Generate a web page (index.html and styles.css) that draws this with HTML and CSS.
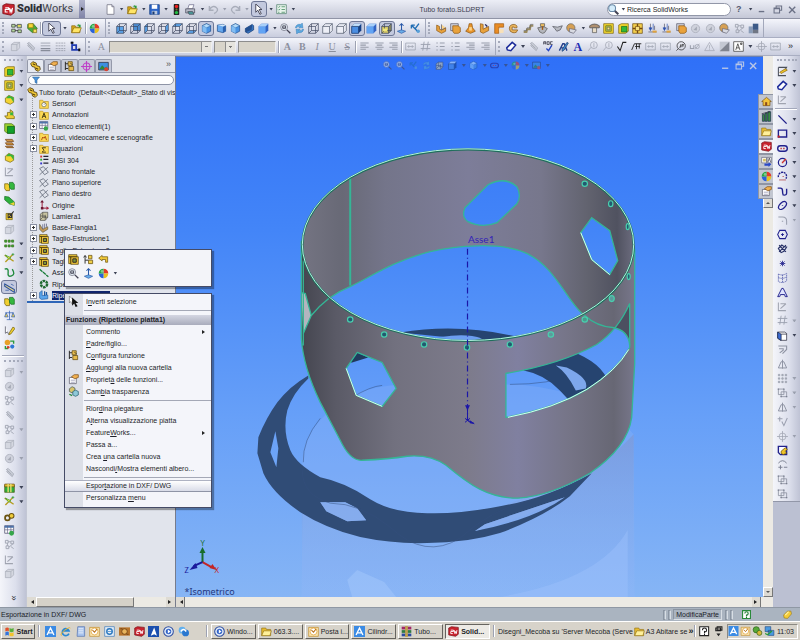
FILE: index.html
```html
<!DOCTYPE html>
<html lang="it">
<head>
<meta charset="utf-8">
<title>SolidWorks - Tubo forato.SLDPRT</title>
<link rel="stylesheet" href="styles.css">
</head>
<body>
<svg class="sprite" aria-hidden="true">
<symbol id="new" viewBox="0 0 16 16"><path d="M3 1h7l3 3v11H3z" fill="#fff" stroke="#667"/><path d="M10 1v3h3" fill="#ccd" stroke="#667"/></symbol>
<symbol id="open" viewBox="0 0 16 16"><path d="M1 4h5l1 2h6v8H1z" fill="#d8a818" stroke="#8a6a10"/><path d="M1 14l3-7h11l-3 7z" fill="#ffe566" stroke="#8a6a10"/><path d="M8 4q3-4 5-1l1-1v4h-4l2-1q-2-2-4-1z" fill="#2a9a3a"/></symbol>
<symbol id="folder" viewBox="0 0 16 16"><path d="M1 3h6l1 2h6v9H1z" fill="#e8bc30" stroke="#94741a"/><path d="M1 14l3-7h11l-2 7z" fill="#fff09a" stroke="#94741a"/></symbol>
<symbol id="save" viewBox="0 0 16 16"><path d="M1 1h14v14H1z" fill="#2d66c8" stroke="#123c80"/><path d="M4 1h8v6H4z" fill="#fff"/><path d="M4 10h8v5H4z" fill="#b8c8e0"/><path d="M5 11h3v4H5z" fill="#1a3a70"/></symbol>
<symbol id="light" viewBox="0 0 16 16"><rect x="4" y="0" width="8" height="16" rx="1" fill="#222"/><circle cx="8" cy="3.500" r="2.500" fill="#e22"/><circle cx="8" cy="8" r="1.500" fill="#773"/><circle cx="8" cy="12.500" r="2.500" fill="#2b4"/></symbol>
<symbol id="print" viewBox="0 0 16 16"><path d="M4 7l2-6h7l-2 6z" fill="#fff" stroke="#668"/><path d="M1 7h13v6H1z" fill="#b8bcc8" stroke="#445"/><path d="M4 11h7l2 4H6z" fill="#4c9a9a" stroke="#445"/></symbol>
<symbol id="undo" viewBox="0 0 16 16"><path d="M2 3v6h6M2 8q5-7 10-3t-3 9" fill="none" stroke="#a8adba" stroke-width="2"/></symbol>
<symbol id="redo" viewBox="0 0 16 16"><path d="M14 3v6H8M14 8Q9 1 4 5t3 9" fill="none" stroke="#a8adba" stroke-width="2"/></symbol>
<symbol id="cursor" viewBox="0 0 16 16"><path d="M4 0v12l3-3 3 6 2-1-3-6h4z" fill="#fff" stroke="#334" stroke-width="1.200"/></symbol>
<symbol id="cursork" viewBox="0 0 16 16"><path d="M2 0v10l2-2 2 4 2-1-2-4h3z" fill="#fff" stroke="#777"/><path d="M6 2v12l3-3 2 5 3-1-3-5h4z" fill="#111"/></symbol>
<symbol id="list" viewBox="0 0 16 16"><path d="M1 1h14v13H1z" fill="#e8f4ec" stroke="#4a7a68"/><path d="M3 4l1 1 2-2M3 8l1 1 2-2M3 12h2M8 4h5M8 8h5M8 12h5" stroke="#2a7a4a" fill="none"/></symbol>
<symbol id="search" viewBox="0 0 16 16"><path d="M9 9l6 6" stroke="#445" stroke-width="3"/><circle cx="6" cy="6" r="5" fill="#d4ecfa" stroke="#6a8aa8" stroke-width="1.500"/></symbol>
<symbol id="zoomfit" viewBox="0 0 16 16"><path d="M10 10l5 5" stroke="#445" stroke-width="2"/><circle cx="6" cy="6" r="5" fill="#e8f0f8" stroke="#667"/><path d="M3 6h6M4 4h4v4H4z" stroke="#334" fill="none"/></symbol>
<symbol id="refresh" viewBox="0 0 16 16"><path d="M2 7q1-6 8-5l2-2 1 7H7l2-2q-4-1-5 2zM14 9q-1 6-8 5l-2 2-1-7h6l-2 2q4 1 5-2z" fill="#5aa8e0" stroke="#2a70b0" stroke-width=".600"/></symbol>
<symbol id="ball" viewBox="0 0 16 16"><path d="M8 8V1a7 7 0 0 1 7 7z" fill="#e23a2a"/><path d="M8 8h7a7 7 0 0 1-7 7z" fill="#e8c020"/><path d="M8 8v7a7 7 0 0 1-7-7z" fill="#2a62d8"/><path d="M8 8H1a7 7 0 0 1 7-7z" fill="#27a846"/><circle cx="6" cy="5" r="2" fill="#fff" opacity=".4"/></symbol>
<symbol id="tree1" viewBox="0 0 16 16"><path d="M1 2h5v4H1zM1 9h5v4H1zM9 2h6v5H9zM10 10h5v4h-5z" fill="#b8dca0" stroke="#333"/><path d="M6 4h3M6 11h4" stroke="#222"/><path d="M10 3h4v2h-4z" fill="#e8d040"/></symbol>
<symbol id="tag" viewBox="0 0 16 16"><path d="M1 2l8-1 6 7-7 6-7-6z" fill="#4caf3c" stroke="#2a6a1a"/><path d="M2 1h7v6H2z" fill="#f8d838" stroke="#8a7010"/><path d="M9 9h5v5H9z" fill="#f4e060" stroke="#7a6410"/></symbol>
<symbol id="cw" viewBox="0 0 16 16"><path d="M1 5h10v10H1zM5 1h10v10H5zM1 5l4-4M11 5l4-4M1 15l4-4M11 15l4-4" fill="none" stroke="#39425a"/></symbol>
<symbol id="cf" viewBox="0 0 16 16"><path d="M1 5h10v10H1z" fill="#5ba4ea"/><use href="#cw"/></symbol>
<symbol id="cb" viewBox="0 0 16 16"><path d="M5 1h10v10H5z" fill="#4d90d6"/><use href="#cw"/></symbol>
<symbol id="cl" viewBox="0 0 16 16"><path d="M1 5l4-4v10l-4 4z" fill="#5ba4ea"/><use href="#cw"/></symbol>
<symbol id="cr" viewBox="0 0 16 16"><path d="M11 5l4-4v10l-4 4z" fill="#5ba4ea"/><use href="#cw"/></symbol>
<symbol id="ct" viewBox="0 0 16 16"><path d="M1 5l4-4h10l-4 4z" fill="#5ba4ea"/><use href="#cw"/></symbol>
<symbol id="cd" viewBox="0 0 16 16"><path d="M1 15l4-4h10l-4 4z" fill="#5ba4ea"/><use href="#cw"/></symbol>
<symbol id="iso" viewBox="0 0 16 16"><path d="M8 1l6 3v8l-6 3-6-3V4z" fill="#4a94e4" stroke="#1b4c8c"/><path d="M8 1l6 3-6 3-6-3z" fill="#b4dcfa" stroke="#1b4c8c" stroke-width=".600"/><path d="M8 7v8l-6-3V4z" fill="#82bdf2"/></symbol>
<symbol id="tri" viewBox="0 0 16 16"><path d="M2 3l8-1 4 2v8l-4 2-8-2z" fill="#69aaee" stroke="#1b4c8c"/><path d="M10 5l4-1v8l-4 2z" fill="#2b62b0"/><path d="M2 3l8 2 4-1-4-2z" fill="#d0e8fc"/></symbol>
<symbol id="norm" viewBox="0 0 16 16"><path d="M2 8l10-6 2 2v6L6 15l-4-2z" fill="#3574c4" stroke="#163a70"/><path d="M2 8l10-6-1 8-8 3z" fill="#245090"/></symbol>
<symbol id="penA" viewBox="0 0 16 16"><path d="M2 14L7 4h2l4 10M4 10h7" fill="none" stroke="#24408c" stroke-width="2"/><path d="M6 12l7-10 2 1-6 10-3 2z" fill="#3f8ad0" stroke="#1b3a6c"/></symbol>
<symbol id="shade" viewBox="0 0 16 16"><path d="M1 5l4-4h10v10l-4 4H1z" fill="#143f86"/><path d="M1 5h10v10H1z" fill="#4b8ee2"/><path d="M1 5l4-4h10l-4 4z" fill="#c2e0fb"/><path d="M1 5h10v10H1z" fill="none" stroke="#1b3a6c"/></symbol>
<symbol id="shade2" viewBox="0 0 16 16"><path d="M1 5l4-4h10v10l-4 4H1z" fill="#3264c4"/><path d="M1 5h10v10H1z" fill="#62a4f4"/><path d="M1 5l4-4h10l-4 4z" fill="#a8d0fa"/></symbol>
<symbol id="shade3" viewBox="0 0 16 16"><path d="M1 5h10v10H1z" fill="#d0c468"/><path d="M11 5l4-4v10l-4 4z" fill="#8a8a60"/><use href="#cw"/><path d="M3 8h6v4H3z" fill="#f2e87a"/></symbol>
<symbol id="hide" viewBox="0 0 16 16"><path d="M1 5l4-4h10v10l-4 4H1zM1 5h10v10M11 5l4-4" fill="#eceef6" stroke="#4c5468"/></symbol>
<symbol id="axis" viewBox="0 0 16 16"><path d="M8 1v11M5 4l3-3 3 3" stroke="#2858a8" fill="none" stroke-width="1.500"/><path d="M2 12l6-2 6 2-6 3z" fill="#6aaee8" stroke="#2858a8"/></symbol>
<symbol id="pins" viewBox="0 0 16 16"><path d="M2 3l10 10M2 3h5M2 3v5M13 1L7 9" stroke="#1f6db4" stroke-width="2" fill="none"/><circle cx="12" cy="12" r="2.500" fill="#58a0d8"/></symbol>
<symbol id="f1" viewBox="0 0 16 16"><path d="M1 3l4 2v4l3 1 6-3v5l-6 3-7-4z" fill="#e9a23c" stroke="#8a5510"/><path d="M8 2v8l6-3" fill="#fbd48a" stroke="#556"/></symbol>
<symbol id="f2" viewBox="0 0 16 16"><path d="M1 1h11v10H1z" fill="#d0d4e0" stroke="#556"/><path d="M4 4h8l3 3v6l-3 2H6l-2-3z" fill="#e9a23c" stroke="#8a5510"/></symbol>
<symbol id="f3" viewBox="0 0 16 16"><path d="M6 1h4l1 6 4 5-7 3-7-3 4-5z" fill="#e9952c" stroke="#8a5510"/><path d="M6 6h4v5H6z" fill="#fbd48a"/></symbol>
<symbol id="f4" viewBox="0 0 16 16"><path d="M2 1l4 1v7l8-4v6l-8 4-4-2z" fill="#e9a23c" stroke="#8a5510"/><path d="M9 2l3 3" stroke="#225" stroke-width="2"/></symbol>
<symbol id="f5" viewBox="0 0 16 16"><path d="M1 1h13v5H7v9H1z" fill="#e98c24" stroke="#a05a10"/><path d="M7 8l7 1v5l-6 1z" fill="#f8e0b8"/></symbol>
<symbol id="f6" viewBox="0 0 16 16"><path d="M2 8q0-6 7-6 5 1 4 5H9q0-2-3-1v4h8q-1 5-7 4-5-1-5-6z" fill="#e9b45c" stroke="#805010"/></symbol>
<symbol id="f7" viewBox="0 0 16 16"><path d="M1 13h4l1-4h4l1-5h4" fill="none" stroke="#998a60" stroke-width="3"/><path d="M1 11h4l1-4h4l1-5h4" fill="none" stroke="#656565"/></symbol>
<symbol id="f8" viewBox="0 0 16 16"><path d="M5 1h6v4H5z" fill="#f0c060" stroke="#555"/><path d="M1 7l6-1h4l4 2-4 6-3 1-4-2z" fill="#b4b6bc" stroke="#555"/><path d="M8 5v5" stroke="#a05a10" stroke-width="2"/></symbol>
<symbol id="fh" viewBox="0 0 16 16"><path d="M1 4q7-5 14 0v3H1z" fill="#b09070" stroke="#444"/><path d="M5 7h6v7H5z" fill="#e8ddc8" stroke="#555"/></symbol>
<symbol id="fd" viewBox="0 0 16 16"><path d="M1 5l7 1 7-2-3 6-5 2-3-4z" fill="#b8bac2" stroke="#50525c"/></symbol>
<symbol id="f9" viewBox="0 0 16 16"><circle cx="7" cy="7" r="6" fill="#d6a054" stroke="#666"/><path d="M5 8l10 2-4 5-6-2z" fill="#d8dae2" stroke="#667"/></symbol>
<symbol id="yb" viewBox="0 0 16 16"><path d="M1 1h14v14H1z" fill="#f4d92e" stroke="#776112"/><path d="M4 4h8v8H4z" fill="#b8d850" stroke="#6a5a10"/><path d="M6 6h4v4H6z" fill="#f7ec80" stroke="#555"/></symbol>
<symbol id="yg" viewBox="0 0 16 16"><path d="M1 3l4-2h10v11l-4 3H1z" fill="#f2d52c" stroke="#776112"/><path d="M5 5h8v8H5z" fill="#30b83a" stroke="#146a1c"/></symbol>
<symbol id="yp" viewBox="0 0 16 16"><path d="M1 1h14v14H1z" fill="#f4cf4c" stroke="#6a4a10"/><path d="M1 8h14M8 1v14" stroke="#744a10" stroke-width="2"/><path d="M5 5h6v6H5z" fill="#f7e080" stroke="#744a10"/></symbol>
<symbol id="dim1" viewBox="0 0 16 16"><path d="M2 13h12M5 1v9M11 4v6" stroke="#556"/><path d="M3 7l2 4 2-4zM9 1v9" stroke="#2a50b0" fill="#2a50b0"/><path d="M8 11h6v3H8z" fill="#e0a23c"/></symbol>
<symbol id="gray" viewBox="0 0 16 16"><circle cx="8" cy="8" r="6" fill="#cfd2dc" stroke="#a4a8b4"/><path d="M5 10l5-5v6z" fill="#a4a8b4"/></symbol>
<symbol id="gcube" viewBox="0 0 16 16"><path d="M2 5l4-3h8v8l-4 4H2z" fill="#d4d7e0" stroke="#a8acb8"/><path d="M2 5h8v9M10 5l4-3" fill="none" stroke="#a8acb8"/></symbol>
<symbol id="gsk" viewBox="0 0 16 16"><path d="M2 2v12h11M5 4h8M5 11l8-7" fill="none" stroke="#a0a4b0" stroke-width="1.500"/></symbol>
<symbol id="gnodes" viewBox="0 0 16 16"><path d="M2 2h4v4H2zM10 3h4v4h-4zM3 10h4v4H3zM10 11l4 3M6 4h4M5 6v4M13 7l-6 5" fill="none" stroke="#9ea3b0" stroke-width="1.300"/></symbol>
<symbol id="gclip" viewBox="0 0 16 16"><path d="M3 4l3-2 8 8-2 4-8-7 1-2 6 6" fill="#c8ccd6" stroke="#9a9fac"/></symbol>
<symbol id="ggrid" viewBox="0 0 16 16"><path d="M2 2h2v2H2zM7 2h2v2H7zM12 2h2v2h-2zM2 7h2v2H2zM7 7h2v2H7zM12 7h2v2h-2zM2 12h2v2H2zM7 12h2v2H7zM12 12h2v2h-2z" fill="#c8ccd6" stroke="#8f94a2"/></symbol>
<symbol id="lines" viewBox="0 0 16 16"><path d="M1 3h14M1 7h14" stroke="#888d9a"/><path d="M1 11h14M1 14h14" stroke="#888d9a" stroke-width="2"/></symbol>
<symbol id="dash" viewBox="0 0 16 16"><path d="M1 3h14M1 7h14M1 11h14M1 14h14" stroke="#8d929f" stroke-dasharray="3 1"/></symbol>
<symbol id="bluel" viewBox="0 0 16 16"><path d="M3 1v12h11M3 6h6v7" stroke="#1f3bb0" stroke-width="2.500" fill="none"/><path d="M1 1h4v3H1zM12 11h3v4h-3z" fill="#111"/></symbol>
<symbol id="al" viewBox="0 0 16 16"><path d="M2 3h12M2 6h8M2 9h12M2 12h8" stroke="#989dab" stroke-width="1.500"/></symbol>
<symbol id="ac" viewBox="0 0 16 16"><path d="M2 3h12M4 6h8M2 9h12M4 12h8" stroke="#989dab" stroke-width="1.500"/></symbol>
<symbol id="ar" viewBox="0 0 16 16"><path d="M2 3h12M6 6h8M2 9h12M6 12h8" stroke="#989dab" stroke-width="1.500"/></symbol>
<symbol id="bul" viewBox="0 0 16 16"><path d="M2 3h2M2 8h2M2 13h2M7 3h7M7 8h7M7 13h7" stroke="#989dab" stroke-width="1.500"/></symbol>
<symbol id="box" viewBox="0 0 16 16"><path d="M1 3h14v10H1zM4 8h8M6 6L4 8l2 2M10 6l2 2-2 2" stroke="#989dab" fill="none"/></symbol>
<symbol id="erase" viewBox="0 0 16 16"><path d="M1 10l8-8 5 4-7 8-5-1z" fill="#fff" stroke="#1d2c9a" stroke-width="2.200"/></symbol>
<symbol id="abc" viewBox="0 0 16 16"><path d="M5 11l3 3 5-8" stroke="#2544c0" stroke-width="2" fill="none"/><path d="M1 5V1h3v4M1 3h3M6 1v4h3V1zM14 1h-3v4h3" stroke="#223" fill="none"/></symbol>
<symbol id="bal" viewBox="0 0 16 16"><circle cx="10" cy="6" r="5" fill="none" stroke="#9a9fac"/><path d="M10 3v6M2 14l4-5" stroke="#9a9fac"/></symbol>
<symbol id="rough" viewBox="0 0 16 16"><path d="M2 8l4 6 4-12h5" stroke="#222" stroke-width="1.500" fill="none"/></symbol>
<symbol id="weld" viewBox="0 0 16 16"><path d="M1 13l4-9h10M6 8h7M8 4v8M12 4v7" stroke="#222" stroke-width="1.300" fill="none"/></symbol>
<symbol id="a1b" viewBox="0 0 16 16"><circle cx="9" cy="7" r="6" fill="none" stroke="#222"/><path d="M2 14l3-3M6 9h2V5M10 9V5h3M10 7h3" stroke="#222" fill="none"/></symbol>
<symbol id="holec" viewBox="0 0 16 16"><path d="M2 6v5h5V6" fill="none" stroke="#9a9fac" stroke-width="1.500"/><circle cx="12" cy="8" r="3" fill="none" stroke="#9a9fac"/><path d="M9 12l6-8" stroke="#9a9fac"/></symbol>
<symbol id="warn" viewBox="0 0 16 16"><path d="M8 2l7 12H1zM8 6v5M8 12v1" fill="none" stroke="#a0a4b2"/></symbol>
<symbol id="hatch" viewBox="0 0 16 16"><path d="M1 1h14v14H1z" fill="#c4c8d2"/><path d="M15 1v14H1z" fill="#80848f"/></symbol>
<symbol id="blocks" viewBox="0 0 16 16"><path d="M1 5h6v10H1z" fill="#8a9cb8"/><path d="M7 1h8v9H7z" fill="#3c5a88"/><path d="M7 10h8v5H7z" fill="#707684"/></symbol>
<symbol id="frameA" viewBox="0 0 16 16"><path d="M1 1h14v14H1z" fill="#fff" stroke="#333"/><path d="M4 13l3-9 3 9M5 10h4M11 3h2v2h-2z" stroke="#222" fill="none"/></symbol>
<symbol id="target" viewBox="0 0 16 16"><circle cx="8" cy="8" r="5" fill="none" stroke="#9a9fac"/><path d="M8 0v16M0 8h16" stroke="#9a9fac"/></symbol>
<symbol id="gear" viewBox="0 0 16 16"><path d="M1 4l3-3 5 2 1 4 4 1 1 4-3 3-4-2-1-4-4-1z" fill="#f0c838" stroke="#4c3808" stroke-width="1.200"/><path d="M4 4l4 2M8 10l4 2" stroke="#4c3808" stroke-width="1.500"/></symbol>
<symbol id="hand" viewBox="0 0 16 16"><path d="M2 5h10v9H2z" fill="#fff" stroke="#556"/><path d="M5 4l4-3h6v4l-5 2z" fill="#f0b050" stroke="#7a4a10"/><path d="M4 9h6M4 12h6" stroke="#88a"/></symbol>
<symbol id="conf" viewBox="0 0 16 16"><path d="M2 1v12M2 4h4M2 11h4" stroke="#333" fill="none" stroke-width="1.500"/><path d="M6 1h6v6H6zM7 8h7v6H7z" fill="#e6bb4c" stroke="#5c4408"/><path d="M9 3l4 3" stroke="#3a3a20"/></symbol>
<symbol id="parent" viewBox="0 0 16 16"><path d="M3 14V3M1 5l2-3 2 3M3 9h5" stroke="#333" fill="none" stroke-width="1.400"/><path d="M8 2h5v5H8zM8 9h6v5H8z" fill="#f0cf48" stroke="#5c4408"/></symbol>
<symbol id="cross" viewBox="0 0 16 16"><circle cx="8" cy="8" r="5" fill="none" stroke="#c040c8" stroke-width="1.600"/><path d="M8 0v16M0 8h16" stroke="#c040c8" stroke-width="1.600"/></symbol>
<symbol id="pic" viewBox="0 0 16 16"><path d="M1 2h14v11H1z" fill="#3d8fe0" stroke="#223"/><path d="M2 12l4-6 4 4 2-2 2 4z" fill="#2f8a3a"/><circle cx="12" cy="12" r="3" fill="#d84432"/></symbol>
<symbol id="funnel" viewBox="0 0 16 16"><path d="M1 2h14L10 8v7l-4-2V8z" fill="#4c94dc" stroke="#22588c"/></symbol>
<symbol id="fa" viewBox="0 0 16 16"><path d="M1 2h5l1 2h8v11H1z" fill="#fcd955" stroke="#b78f1c"/><path d="M5 13l3-8 3 8M6 10h4" stroke="#332b10" stroke-width="1.400" fill="none"/></symbol>
<symbol id="fs" viewBox="0 0 16 16"><path d="M1 2h5l1 2h8v11H1z" fill="#fcd955" stroke="#b78f1c"/><circle cx="8" cy="9" r="3.500" fill="#fff" stroke="#554"/><path d="M8 9l2-2" stroke="#333"/></symbol>
<symbol id="fl" viewBox="0 0 16 16"><path d="M1 2h5l1 2h8v11H1z" fill="#fcd955" stroke="#b78f1c"/><path d="M4 13l2-5 2 2 2-3 2 6" stroke="#b04a10" stroke-width="1.500" fill="none"/></symbol>
<symbol id="fe" viewBox="0 0 16 16"><path d="M1 2h5l1 2h8v11H1z" fill="#fcd955" stroke="#b78f1c"/><path d="M11 6H5l3 4-3 3h6" stroke="#332b10" stroke-width="1.400" fill="none"/></symbol>
<symbol id="tab" viewBox="0 0 16 16"><path d="M1 1h13v11H1z" fill="#fff" stroke="#446"/><path d="M1 1h13v3H1z" fill="#4a76b0"/><path d="M1 7h13M5 1v11M10 1v11" stroke="#668"/><circle cx="11" cy="12" r="3.500" fill="#35a64a"/></symbol>
<symbol id="mat" viewBox="0 0 16 16"><path d="M2 1h3v3H2z" fill="#c33"/><path d="M2 6h3v3H2z" fill="#3a3"/><path d="M2 12h3v3H2z" fill="#33c"/><path d="M7 2h8M7 7h8M7 13h8" stroke="#223" stroke-width="2"/></symbol>
<symbol id="plane" viewBox="0 0 16 16"><path d="M1 4l6-3 8 9-6 4zM1 14L14 2" fill="none" stroke="#5a6270" stroke-width="1.200"/></symbol>
<symbol id="orig" viewBox="0 0 16 16"><path d="M5 2v11h10" fill="none" stroke="#a22340" stroke-width="1.600"/><path d="M5 0l3 4H2zM3 11h4v4H3z" fill="#6a1630"/><path d="M12 10l4 3-4 3z" fill="#a22340"/></symbol>
<symbol id="sheet" viewBox="0 0 16 16"><path d="M2 5l4-3h8v8l-4 5H2zM6 2v8l-4 4M6 10h8M2 8h8v6M10 6v4" fill="#c9c4a0" stroke="#444"/></symbol>
<symbol id="flange" viewBox="0 0 16 16"><path d="M1 2l5 8 8-4v4l-8 5-5-5z" fill="#c89c58" stroke="#554"/><path d="M6 2v8M9 1v7M12 1v5" stroke="#446"/></symbol>
<symbol id="cut" viewBox="0 0 16 16"><path d="M1 1h12v3H1zM1 4h3v10H1zM4 4h11v11H4z" fill="#f0c93c" stroke="#4e3c08"/><path d="M7 7h5v5H7z" fill="#7b9a3a" stroke="#322" stroke-width="1.400"/></symbol>
<symbol id="axl" viewBox="0 0 16 16"><path d="M1 2l14 12" stroke="#157a35" stroke-width="2" stroke-dasharray="6 1"/></symbol>
<symbol id="circ" viewBox="0 0 16 16"><circle cx="8" cy="8" r="5" fill="none" stroke="#206a30" stroke-width="4" stroke-dasharray="4 1.200"/></symbol>
<symbol id="flat" viewBox="0 0 16 16"><path d="M1 4l4-3v8l9-1v6L4 15l-3-2z" fill="#5aa5ec" stroke="#1c56a0"/><path d="M9 2v7M12 3v5" stroke="#1c56a0" stroke-width="2"/></symbol>
<symbol id="gg" viewBox="0 0 16 16"><path d="M1 4h5l2 3v7H3l-2-3z" fill="#f0cf30" stroke="#6d5c0c"/><path d="M8 2h5l2 3v7h-5l-2-3z" fill="#35b840" stroke="#176a20"/></symbol>
<symbol id="gy" viewBox="0 0 16 16"><path d="M2 6l5-4 7 3v7l-5 3-7-3z" fill="#f4d432" stroke="#7a6610"/><path d="M7 2l7 3v7l-4-6H3z" fill="#38b43e"/></symbol>
<symbol id="gstep" viewBox="0 0 16 16"><path d="M1 10h4V5h4V1l4 3v5l2 2v3H4z" fill="#eccd38" stroke="#6d5c0c"/><path d="M9 5h4v4H9z" fill="#38b43e"/></symbol>
<symbol id="gbox" viewBox="0 0 16 16"><path d="M1 1h10l4 3v11H5l-4-3z" fill="#9ad430" stroke="#4a6a10"/><path d="M5 5h10v10H5z" fill="#12a02c" stroke="#0c5c18"/></symbol>
<symbol id="brown" viewBox="0 0 16 16"><path d="M2 2h10l2 3H4zM2 7h10l2 3H4zM2 12h10l2 2H4z" fill="#d79a48" stroke="#6a3c10"/></symbol>
<symbol id="gwedge" viewBox="0 0 16 16"><path d="M1 2l6 1 8 7v5l-7-2-7-6z" fill="#2eb13c" stroke="#176a20"/><path d="M8 13l7-3v5z" fill="#f2d434"/></symbol>
<symbol id="wand" viewBox="0 0 16 16"><path d="M3 5h9v9H3z" fill="#eecb34" stroke="#6d5c0c"/><path d="M6 12l8-10M6 6h5v5H6z" stroke="#333" stroke-width="1.500" fill="none"/></symbol>
<symbol id="dots" viewBox="0 0 16 16"><path d="M1 3h3v3H1zM6 3h3v3H6zM11 3h3v3h-3zM1 10h3v3H1zM6 10h3v3H6zM11 10h3v3h-3z" fill="#35b840" stroke="#3e6a14"/></symbol>
<symbol id="gift" viewBox="0 0 16 16"><path d="M1 5h14v10H1z" fill="#2fae3a" stroke="#4a5a10"/><path d="M1 3h14v4H1z" fill="#e4c030" stroke="#6a4a10"/><path d="M6 3v12M10 3v12" stroke="#e8e070" stroke-width="2"/></symbol>
<symbol id="spark" viewBox="0 0 16 16"><path d="M1 3l13 9M2 13L13 2" stroke="#b59c20" stroke-width="2"/><path d="M11 2h4M13 0v4M2 3l5 6 3-2z" stroke="#2a9a3a" fill="#f4df40"/></symbol>
<symbol id="curve" viewBox="0 0 16 16"><path d="M1 3q6-2 5 5t5 5 1-10" fill="none" stroke="#1f8a3c" stroke-width="2"/></symbol>
<symbol id="meas" viewBox="0 0 16 16"><path d="M1 3l14 8v4L1 6z" fill="#e7d58b" stroke="#274f9c" stroke-width="1.500"/><path d="M2 12h5M10 3l4 2" stroke="#274f9c"/></symbol>
<symbol id="scale" viewBox="0 0 16 16"><path d="M8 1v13M2 4h12M4 14h8M3 4l-2 6h5zM13 4l-2 6h5z" stroke="#2a5cb4" fill="#f0cf4a"/></symbol>
<symbol id="pen" viewBox="0 0 16 16"><path d="M2 2v10l3-2 2 4" stroke="#445" fill="#fff"/><path d="M8 11l5-8 3 2-6 8-3 1z" fill="#f0cf30" stroke="#6d5c0c"/></symbol>
<symbol id="swap" viewBox="0 0 16 16"><circle cx="5" cy="5" r="4" fill="#e8a028"/><circle cx="12" cy="11" r="3" fill="#2f78d4"/><path d="M9 3h5v4M6 14H2v-4" stroke="#2a9a3a" stroke-width="2" fill="none"/><circle cx="6" cy="12" r="2" fill="#d43c28"/></symbol>
<symbol id="cogs" viewBox="0 0 16 16"><circle cx="5" cy="10" r="3.500" fill="none" stroke="#6a5210" stroke-width="2.500"/><circle cx="11" cy="7" r="3.500" fill="#f0cc38" stroke="#6a5210" stroke-width="1.500"/></symbol>
<symbol id="ske" viewBox="0 0 16 16"><path d="M2 2v12h11M2 2h12l-3 5" fill="none" stroke="#4a4f5c" stroke-width="1.500"/><path d="M4 9l8-5 3 2-9 5z" fill="#f0c428" stroke="#866410"/></symbol>
<symbol id="skb" viewBox="0 0 16 16"><path d="M2 2h12v12H5l-3-3z" fill="#fff" stroke="#21218c" stroke-width="2"/><path d="M6 9l6-5 3 2-3 3 2 3-5 2-3-2z" fill="#f0c428" stroke="#5a4408"/></symbol>
<symbol id="s1" viewBox="0 0 16 16"><path d="M2 2l12 12" stroke="#21218c" stroke-width="2"/></symbol>
<symbol id="s2" viewBox="0 0 16 16"><path d="M2 3h12v10H2z" fill="none" stroke="#21218c" stroke-width="2"/><path d="M1 11h3v3H1z" fill="#c22"/></symbol>
<symbol id="s3" viewBox="0 0 16 16"><rect x="1" y="4" width="14" height="8" rx="4" fill="none" stroke="#21218c" stroke-width="2"/><path d="M5 8h2M9 8h2" stroke="#b33" stroke-width="2"/></symbol>
<symbol id="s4" viewBox="0 0 16 16"><circle cx="8" cy="8" r="6" fill="none" stroke="#21218c" stroke-width="1.800"/><path d="M8 8l5-5M7 8h2" stroke="#c33" stroke-width="2"/></symbol>
<symbol id="s5" viewBox="0 0 16 16"><path d="M2 9a6 6 0 1 1 11 2" fill="none" stroke="#21218c" stroke-width="2" stroke-dasharray="3 1"/><path d="M3 13h10M8 8h2" stroke="#a33"/></symbol>
<symbol id="s6" viewBox="0 0 16 16"><path d="M1 3h4q3 0 3 4t1 6q5 1 5-3V4" fill="none" stroke="#21218c" stroke-width="2"/></symbol>
<symbol id="s7" viewBox="0 0 16 16"><ellipse cx="8" cy="8" rx="7" ry="4" transform="rotate(-45 8 8)" fill="none" stroke="#21218c" stroke-width="1.800"/><path d="M7 8h2" stroke="#21218c"/></symbol>
<symbol id="s8" viewBox="0 0 16 16"><path d="M2 3h6q6 0 6 6v5M7 9h2" fill="none" stroke="#9a9fae" stroke-width="1.500"/></symbol>
<symbol id="s9" viewBox="0 0 16 16"><path d="M4 2h8l3 6-3 6H4L1 8zM6 8h4M8 6v4" fill="none" stroke="#21218c" stroke-width="1.500"/></symbol>
<symbol id="s10" viewBox="0 0 16 16"><path d="M2 8l5-5 3 2 4 1-4 6-4 2zM3 3l10 10M13 3L3 13" fill="none" stroke="#273066" stroke-width="1.600"/></symbol>
<symbol id="s11" viewBox="0 0 16 16"><path d="M8 4v8M4 8h8M5 5l6 6M11 5l-6 6" stroke="#21218c" stroke-width="1.200"/></symbol>
<symbol id="s12" viewBox="0 0 16 16"><path d="M2 3q6 3 12-1v11q-6 4-12 1zM2 8q6 3 12-1M8 4v11" fill="none" stroke="#3b45a0" stroke-dasharray="2 1"/></symbol>
<symbol id="s13" viewBox="0 0 16 16"><path d="M1 14L7 2h2l6 12h-3l-1-3H5l-1 3z" fill="#dfe4ff" stroke="#21218c" stroke-width="1.400"/></symbol>
<symbol id="gtrim" viewBox="0 0 16 16"><path d="M1 5h14M1 11h14M6 1l-2 13M12 1l-2 13" stroke="#9a9fae" stroke-width="1.300"/></symbol>
<symbol id="gmir" viewBox="0 0 16 16"><path d="M8 1v13M6 4L2 13h12L10 4z" fill="none" stroke="#8e93a2" stroke-width="1.400"/></symbol>
<symbol id="goff" viewBox="0 0 16 16"><path d="M2 3h12v5l-6 6M3 7h6v2l-5 4" fill="none" stroke="#8e93a2" stroke-width="1.600"/></symbol>
<symbol id="gsq" viewBox="0 0 16 16"><path d="M2 3h8v8H2zM6 7h8v7H6z" fill="none" stroke="#8e93a2" stroke-width="1.200"/><path d="M1 2h2v2H1zM9 2h2v2H9zM13 13h2v2h-2zM5 13h2v2H5z" fill="#7a7f90"/></symbol>
<symbol id="garc" viewBox="0 0 16 16"><path d="M2 6q6-7 12 0M5 9v6M2 12h6M10 12h5" fill="none" stroke="#7a7f90" stroke-width="1.400"/></symbol>
<symbol id="gpv" viewBox="0 0 16 16"><path d="M4 1v7M1 4h7M7 8l3 6 5-11" fill="none" stroke="#9a9fae" stroke-width="1.500"/></symbol>
<symbol id="dark" viewBox="0 0 16 16"><path d="M1 3h10l3 2v10H5l-4-3z" fill="#fff" stroke="#223"/><path d="M1 3l5 3v9l-5-3z" fill="#3d6cd4" stroke="#124"/><path d="M6 6h8" stroke="#223"/></symbol>
<symbol id="home" viewBox="0 0 16 16"><path d="M1 8l7-6 7 6h-2v6H3V8z" fill="#f3c33c" stroke="#7a5210"/><path d="M6 9h3v5H6z" fill="#8a4a1c"/></symbol>
<symbol id="lib" viewBox="0 0 16 16"><path d="M2 5h3v10H2zM6 3h3v12H6zM10 1h4v14h-4z" fill="#3a8a44" stroke="#1c2c4c"/><path d="M1 4l12-3" stroke="#223"/></symbol>
<symbol id="swi" viewBox="0 0 16 16"><path d="M1 3l4-2 10 1v10l-4 3-10-2z" fill="#c8232e" stroke="#7a1018"/><path d="M4 6h4v2H4v3h3M9 6l1 5 1-3 1 3 1-5" stroke="#fff" fill="none" stroke-width="1.300"/></symbol>
<symbol id="pal" viewBox="0 0 16 16"><path d="M1 2h7v8H1zM9 2h6v8H9z" fill="#fff" stroke="#667"/><path d="M3 4h4v4H3z" fill="#d8c060"/><path d="M10 9l2-6 2 6" stroke="#334" fill="none"/><path d="M5 11h6v-2l4 3-4 4v-2H5z" fill="#2a48c8"/></symbol>
<symbol id="help" viewBox="0 0 16 16"><path d="M1 1h14v14H1z" fill="#fff" stroke="#2a8a3a" stroke-width="2"/><path d="M5 6q0-3 3-3t3 3-3 3v2M8 12v2" stroke="#1e7a30" stroke-width="2" fill="none"/></symbol>
<symbol id="helpk" viewBox="0 0 16 16"><path d="M1 1h13v13H1z" fill="#fff" stroke="#222" stroke-width="1.500"/><path d="M5 6q0-3 3-3t3 3-3 2v2M8 11v2" stroke="#222" stroke-width="1.500" fill="none"/></symbol>
<symbol id="label" viewBox="0 0 16 16"><path d="M1 9l7-7 6 0 1 5-7 8-6-1z" fill="#f5cc38" stroke="#92700e"/><path d="M4 9l6-6" stroke="#fff4a8" stroke-width="2"/></symbol>
<symbol id="win" viewBox="0 0 16 16"><path d="M2 3q3-2 5 0v5q-2-2-5 0z" fill="#e2502a"/><path d="M8 3q3 2 6 0v5q-3 2-6 0z" fill="#56b03a"/><path d="M2 9q3-2 5 0v5q-2-2-5 0z" fill="#3274dc"/><path d="M8 9q3 2 6 0v5q-3 2-6 0z" fill="#f2c32c"/></symbol>
<symbol id="appA" viewBox="0 0 16 16"><path d="M0 0h16v16H0z" fill="#3b8be4"/><path d="M3 13L8 3l5 10M5 10h6" fill="none" stroke="#fff" stroke-width="2"/></symbol>
<symbol id="ie" viewBox="0 0 16 16"><path d="M13 11a5 5 0 1 1 0-4H4" fill="none" stroke="#2a88d4" stroke-width="2.500"/><path d="M2 14q-2-3 5-8t8-3" fill="none" stroke="#e9b42a" stroke-width="1.400"/></symbol>
<symbol id="doc" viewBox="0 0 16 16"><path d="M4 1h10v14H3z" fill="#a9c4ee" stroke="#5070b0"/><path d="M5 4h7M5 7h7M5 10h7" stroke="#fff"/></symbol>
<symbol id="mail" viewBox="0 0 16 16"><path d="M1 2h14v13H1z" fill="#fbe7b4" stroke="#c08a28"/><circle cx="8" cy="8" r="5" fill="#fff" stroke="#e09a28"/><path d="M5 6l3 3 4-5" stroke="#b9701a" stroke-width="1.500" fill="none"/></symbol>
<symbol id="eng" viewBox="0 0 16 16"><path d="M1 1h14v14H1z" fill="#e8f0f8" stroke="#3a78b8"/><circle cx="8" cy="8" r="4" fill="none" stroke="#2a78c0" stroke-width="2"/><path d="M5 8h7" stroke="#2a78c0"/></symbol>
<symbol id="bro" viewBox="0 0 16 16"><path d="M0 2h16v12H0z" fill="#b8742a"/><circle cx="8" cy="8" r="4" fill="#e8b45c" stroke="#5a300c"/><path d="M2 4h3M11 12h3" stroke="#5a300c"/></symbol>
<symbol id="blu" viewBox="0 0 16 16"><path d="M0 0h16v16H0z" fill="#1a4fae"/><path d="M9 2l4 12-4-2-5 2 2-5z" fill="#fff"/></symbol>
<symbol id="med" viewBox="0 0 16 16"><circle cx="8" cy="8" r="7" fill="#e6effa" stroke="#2c4ca0" stroke-width="1.500"/><circle cx="8" cy="8" r="4" fill="#3264c8"/><path d="M7 5l4 3-4 3z" fill="#fff"/></symbol>
<symbol id="syn" viewBox="0 0 16 16"><circle cx="6" cy="6" r="5" fill="#62b0ee"/><circle cx="11" cy="10" r="5" fill="#2a78d0"/><path d="M4 8q4-6 8 0" stroke="#fff" stroke-width="2" fill="none"/></symbol>
<symbol id="rar" viewBox="0 0 16 16"><path d="M1 1h14v4H1z" fill="#a02868"/><path d="M1 6h14v4H1z" fill="#2f7a44"/><path d="M1 11h14v4H1z" fill="#2c4ca0"/><path d="M6 0h4v16H6z" fill="#c0a050"/></symbol>
<symbol id="net" viewBox="0 0 16 16"><path d="M1 1h9v8H1zM6 7h9v8H6z" fill="#4a9ae0" stroke="#234a80"/><path d="M1 12l4 2 7-6" stroke="#2a9a3a" stroke-width="2" fill="none"/></symbol>
<symbol id="shield" viewBox="0 0 16 16"><circle cx="6" cy="6" r="5" fill="#58a838" stroke="#245a14"/><circle cx="11" cy="11" r="4" fill="#d8b838" stroke="#245a14"/></symbol>
<symbol id="glass" viewBox="0 0 16 16"><path d="M2 4l4-3 4 2v5l-4 2-4-2z" fill="#d8c46a" stroke="#455"/><path d="M7 8l4-2 4 2v5l-4 2-4-2z" fill="#8fc8d8" stroke="#1f5a6a"/><path d="M2 12l4 2" stroke="#2a8a3a" stroke-width="2"/></symbol>
</svg>

<header class="titlebar">
  <div class="brand"><svg><use href="#swi"/></svg><span><b>Solid</b>Works</span></div><span class="brandarrow"></span>
  <div class="quick">
    <button aria-label="Nuovo"><svg><use href="#new"/></svg></button><i class="d"></i>
    <button aria-label="Apri"><svg><use href="#open"/></svg></button><i class="d"></i>
    <button aria-label="Salva"><svg><use href="#save"/></svg></button><i class="d"></i>
    <button aria-label="Ricostruisci"><svg><use href="#light"/></svg></button>
    <button aria-label="Stampa"><svg><use href="#print"/></svg></button><i class="d"></i>
    <button aria-label="Annulla"><svg><use href="#undo"/></svg></button><i class="d off"></i>
    <button aria-label="Ripristina"><svg><use href="#redo"/></svg></button><i class="d off"></i>
    <button class="on" aria-label="Seleziona"><svg><use href="#cursor"/></svg></button><i class="d"></i>
    <button aria-label="Opzioni"><svg><use href="#list"/></svg></button><i class="d"></i>
  </div>
  <h1>Tubo forato.SLDPRT</h1>
  <div class="find"><svg><use href="#search"/></svg><i class="d"></i><input aria-label="Cerca" value="Ricerca SolidWorks"></div>
  <div class="wctl"><button>?</button><i class="d"></i><button aria-label="Riduci"><svg viewBox="0 0 16 16"><path d="M4 11h8" stroke="#6b7186" stroke-width="2"/></svg></button><button aria-label="Ripristina finestra"><svg viewBox="0 0 16 16"><path d="M6 6V3h8v6h-3M3 6h8v7H3zM3 7h8" stroke="#6b7186" stroke-width="1.500" fill="none"/></svg></button><button aria-label="Chiudi"><svg viewBox="0 0 16 16"><path d="M3 4l9 9M12 4l-9 9" stroke="#6b7186" stroke-width="2"/></svg></button></div>
</header>

<nav class="bar bar1" aria-label="Barre superiori">
  <div class="grp"><i class="g"></i>
    <button><svg><use href="#tree1"/></svg></button><button><svg><use href="#tag"/></svg></button><i class="s"></i>
    <button class="on"><svg><use href="#cursor"/></svg></button><i class="d"></i><button><svg><use href="#open"/></svg></button><i class="s"></i>
    <button><svg><use href="#ball"/></svg></button></div>
  <div class="grp"><i class="g"></i>
    <button><svg><use href="#cf"/></svg></button><button><svg><use href="#cb"/></svg></button><button><svg><use href="#cl"/></svg></button><button><svg><use href="#cr"/></svg></button><button><svg><use href="#ct"/></svg></button><button><svg><use href="#cd"/></svg></button><button class="on"><svg><use href="#iso"/></svg></button><button><svg><use href="#tri"/></svg></button><button><svg><use href="#iso"/></svg></button><button><svg><use href="#norm"/></svg></button><button><svg><use href="#shade2"/></svg></button><i class="d"></i>
    <button><svg><use href="#zoomfit"/></svg></button><button><svg><use href="#refresh"/></svg></button><button><svg><use href="#cw"/></svg></button><button><svg><use href="#hide"/></svg></button><button><svg><use href="#hide"/></svg></button><button class="on"><svg><use href="#shade"/></svg></button><button><svg><use href="#shade2"/></svg></button><button class="on"><svg><use href="#shade3"/></svg></button><button><svg><use href="#axis"/></svg></button><button><svg><use href="#pins"/></svg></button></div>
  <div class="grp"><i class="g"></i>
    <button><svg><use href="#f1"/></svg></button><button><svg><use href="#f2"/></svg></button><button><svg><use href="#f3"/></svg></button><button><svg><use href="#f4"/></svg></button><button><svg><use href="#f5"/></svg></button><button><svg><use href="#f6"/></svg></button><button><svg><use href="#f7"/></svg></button><button><svg><use href="#f8"/></svg></button><button><svg><use href="#fd"/></svg></button><button><svg><use href="#f9"/></svg></button><i class="d"></i>
    <button><svg><use href="#fh"/></svg></button><button><svg><use href="#yb"/></svg></button><button><svg><use href="#yg"/></svg></button><button><svg><use href="#yp"/></svg></button><button><svg><use href="#dim1"/></svg></button><button><svg><use href="#dim1"/></svg></button><button><svg><use href="#f2"/></svg></button><button><svg><use href="#gray"/></svg></button><button><svg><use href="#gray"/></svg></button><button><svg><use href="#f9"/></svg></button><button><svg><use href="#gnodes"/></svg></button><button><svg><use href="#blocks"/></svg></button></div>
  <div class="grp last"></div>
</nav>

<nav class="bar bar2" aria-label="Formattazione">
  <div class="grp"><i class="g"></i>
    <button><svg><use href="#gcube"/></svg></button><button><svg><use href="#gclip"/></svg></button><button><svg><use href="#lines"/></svg></button><button><svg><use href="#dash"/></svg></button><button><svg><use href="#bluel"/></svg></button></div>
  <div class="grp"><i class="g"></i>
    <button class="ser">A</button>
    <select class="c1" aria-label="Carattere"><option></option></select><select class="c2" aria-label="Dimensione"><option></option></select><select class="c3" aria-label="Altezza"><option></option></select><i class="s"></i>
    <button class="ser"><b>A</b></button><button class="ser"><b>B</b></button><button class="ser"><em>I</em></button><button class="ser"><u>U</u></button><button class="ser"><s>S</s></button><i class="s"></i>
    <button><svg><use href="#al"/></svg></button><button><svg><use href="#ac"/></svg></button><button><svg><use href="#ar"/></svg></button><i class="s"></i>
    <button><svg><use href="#box"/></svg></button><button><svg><use href="#gtrim"/></svg></button><button><svg><use href="#bul"/></svg></button><button><svg><use href="#bul"/></svg></button><button><svg><use href="#ar"/></svg></button><button><svg><use href="#ar"/></svg></button></div>
  <div class="grp"><i class="g"></i>
    <button><svg><use href="#erase"/></svg></button><i class="d"></i><button><svg><use href="#gclip"/></svg></button><button><svg><use href="#abc"/></svg></button><button><svg><use href="#penA"/></svg></button><button class="ser blue"><b>A</b></button><button><svg><use href="#bal"/></svg></button><button><svg><use href="#bal"/></svg></button><button><svg><use href="#rough"/></svg></button><button><svg><use href="#weld"/></svg></button><button><svg><use href="#box"/></svg></button><button><svg><use href="#box"/></svg></button><button><svg><use href="#a1b"/></svg></button><button><svg><use href="#holec"/></svg></button><button><svg><use href="#warn"/></svg></button><button><svg><use href="#hatch"/></svg></button><button><svg><use href="#frameA"/></svg></button><i class="d"></i><button><svg><use href="#target"/></svg></button><button><svg><use href="#box"/></svg></button><button class="more">»</button></div>
</nav>

<main>
  <aside class="side left">
    <i class="gh"></i>
    <div class="col c20">
      <p><button><svg><use href="#yg"/></svg></button><i class="d"></i></p><p><button><svg><use href="#yb"/></svg></button><i class="d"></i></p><p><button><svg><use href="#gy"/></svg></button><i class="d"></i></p><p><button><svg><use href="#gstep"/></svg></button></p><p><button><svg><use href="#gbox"/></svg></button></p><p><button><svg><use href="#brown"/></svg></button></p><p><button><svg><use href="#gy"/></svg></button></p><p><button><svg><use href="#gsk"/></svg></button></p><p><button><svg><use href="#gg"/></svg></button></p><p><button><svg><use href="#gwedge"/></svg></button></p><p><button><svg><use href="#wand"/></svg></button></p><p><button><svg><use href="#gcube"/></svg></button></p><p><button><svg><use href="#dots"/></svg></button><i class="d"></i></p><p><button><svg><use href="#spark"/></svg></button><i class="d"></i></p><p><button><svg><use href="#curve"/></svg></button><i class="d"></i></p><p><button class="on"><svg><use href="#meas"/></svg></button></p><p><button><svg><use href="#gg"/></svg></button></p><p><button><svg><use href="#scale"/></svg></button></p><p><button><svg><use href="#pen"/></svg></button></p><p><button><svg><use href="#swap"/></svg></button></p>
    </div>
    <hr><i class="gh"></i>
    <div class="col c15">
      <p><button><svg><use href="#gcube"/></svg></button><i class="d off"></i></p><p><button><svg><use href="#gray"/></svg></button></p><p><button><svg><use href="#gnodes"/></svg></button></p><p><button><svg><use href="#gclip"/></svg></button></p><p><button><svg><use href="#gnodes"/></svg></button><i class="d off"></i></p><p><button><svg><use href="#gcube"/></svg></button></p><p><button><svg><use href="#gray"/></svg></button><i class="d off"></i></p><p><button><svg><use href="#gclip"/></svg></button></p><p><button><svg><use href="#gift"/></svg></button><i class="d"></i></p><p><button><svg><use href="#spark"/></svg></button><i class="d"></i></p><p><button><svg><use href="#cogs"/></svg></button></p><p><button><svg><use href="#tab"/></svg></button></p><p><button><svg><use href="#gnodes"/></svg></button></p><p><button><svg><use href="#gsk"/></svg></button></p><p><button><svg><use href="#gcube"/></svg></button></p>
    </div>
    <button class="more down">»</button>
  </aside>

  <section class="panel">
    <div class="tabs"><button class="sel"><svg><use href="#gear"/></svg></button><button><svg><use href="#hand"/></svg></button><button><svg><use href="#conf"/></svg></button><button><svg><use href="#cross"/></svg></button><button><svg><use href="#pic"/></svg></button><span>»</span></div>
    <div class="filter"><svg><use href="#funnel"/></svg><input aria-label="Filtro"></div>
    <div class="root"><svg><use href="#gear"/></svg>Tubo forato&nbsp; (Default&lt;&lt;Default&gt;_Stato di vis</div>
    <ul class="tree">
      <li><svg><use href="#fs"/></svg>Sensori</li>
      <li class="x"><svg><use href="#fa"/></svg>Annotazioni</li>
      <li class="x"><svg><use href="#tab"/></svg>Elenco elementi(1)</li>
      <li class="x"><svg><use href="#fl"/></svg>Luci, videocamere e scenografie</li>
      <li class="x"><svg><use href="#fe"/></svg>Equazioni</li>
      <li><svg><use href="#mat"/></svg>AISI 304</li>
      <li><svg><use href="#plane"/></svg>Piano frontale</li>
      <li><svg><use href="#plane"/></svg>Piano superiore</li>
      <li><svg><use href="#plane"/></svg>Piano destro</li>
      <li><svg><use href="#orig"/></svg>Origine</li>
      <li><svg><use href="#sheet"/></svg>Lamiera1</li>
      <li class="x"><svg><use href="#flange"/></svg>Base-Flangia1</li>
      <li class="x"><svg><use href="#cut"/></svg>Taglio-Estrusione1</li>
      <li class="x"><svg><use href="#cut"/></svg>Taglio-Estrusione2</li>
      <li class="x"><svg><use href="#cut"/></svg>Taglio-Estrusione3</li>
      <li><svg><use href="#axl"/></svg>Asse1</li>
      <li><svg><use href="#circ"/></svg>RipetizioneCircolare1</li>
      <li class="x"><svg><use href="#flat"/></svg><mark>Ripetizione piatta1</mark></li>
    </ul>
    <div class="rollback"></div>
    <div class="hs"><button class="al"></button><span class="thumb"></span><button class="arr"></button></div>
  </section>

  <section class="work">
    <div class="view">
      <svg class="scene" viewBox="176 56 587 541" role="img" aria-label="Modello">
        <defs>
          <linearGradient id="in" gradientUnits="userSpaceOnUse" x1="302" y1="0" x2="634" y2="0"><stop offset="0" stop-color="#747482"/><stop offset=".12" stop-color="#686976"/><stop offset=".25" stop-color="#74758a"/><stop offset=".5" stop-color="#7d7d99"/><stop offset=".72" stop-color="#77778c"/><stop offset=".86" stop-color="#62636f"/><stop offset=".95" stop-color="#505260"/><stop offset="1" stop-color="#6c6c7e"/></linearGradient>
          <linearGradient id="out" gradientUnits="userSpaceOnUse" x1="302" y1="0" x2="634" y2="0"><stop offset="0" stop-color="#454650"/><stop offset=".1" stop-color="#5a5a66"/><stop offset=".28" stop-color="#72717f"/><stop offset=".5" stop-color="#7d7b8b"/><stop offset=".65" stop-color="#8080a0"/><stop offset=".8" stop-color="#767588"/><stop offset=".94" stop-color="#676774"/><stop offset="1" stop-color="#77768a"/></linearGradient>
          <linearGradient id="ref" x1="0" y1="0" x2="0" y2="1"><stop offset="0" stop-color="#7f92c8" stop-opacity=".5"/><stop offset="1" stop-color="#8db4f4" stop-opacity=".1"/></linearGradient>
        </defs>
        <path d="M303 478Q297 440 325 415Q350 387 400 384L520 384Q600 392 634 434L635 597H301Z" fill="#92b6f8" opacity=".28"/>
        <path d="M634 434V597H302L301 470Q305 498 330 505Q360 500 395 532Q425 555 455 540Q485 503 560 489Q600 470 634 434Z" fill="url(#ref)"/>
        <path d="M347 580L357 570L384 582L396 597H352Z" fill="#a4c8fc" opacity=".5"/><path d="M500 597Q600 580 628 530V597Z" fill="#a0c4fc" opacity=".4"/>
        <path fill-rule="evenodd" d="M308 375Q289 386 277 402Q266 417 258 437L257 453L263 473Q272 493 300 512Q325 528 360 537Q393 544 427 543Q467 543 500 533Q545 516 570 496L592 473Q545 499 500 506Q460 514 427 513Q393 513 370 499Q345 482 320 477Q296 464 290 450Q282 430 287 410Q292 393 308 378ZM275 431L270 452L276 467L278 448ZM320 502L345 502L357 508L366 520L347 521L326 511ZM475 531L485 524L565 497Q535 519 475 531Z" fill="#304c76"/>
        <path d="M475 531L485 524L565 497Q535 514 475 531M320 502L345 502L357 508L366 520L347 521L326 511Z" fill="#88acec" opacity=".7"/>
        <path d="M302 470Q302 495 330 503Q360 503 390 527Q425 560 460 538Q490 510 530 500M303 462Q302 440 320 418M352 397Q370 386 382 385M510 384Q550 384 574 374" fill="none" stroke="#344f7c" stroke-width="1" opacity=".5"/>
        <path d="M400 332Q460 322 520 337L560 347Q598 358 607 378L574 405L560 390Q545 374 524 370Q480 336 440 336Z" fill="#264470"/>
        <path d="M440 337Q465 332 482 338L468 341Z" fill="#6c9ef0"/><path d="M556 365L567 367Q590 378 586 388L576 390Q567 372 556 365Z" fill="#7da7ec"/>
        <path fill-rule="evenodd" d="M302 244.500A166 96 0 0 1 634 244.500Q632 278 613 327Q597 325 585 315C569 305 556 265 525 252C500 241 455 245 430 251C391 261 370 277 350 286Q327 295 311 315Q302 300 302 244ZM465 207L488 184Q505 175 517 186Q522 195 517 203L497 222Q482 228 468 221Q461 216 465 207ZM592 217L610 230L618 260L610 274L592 259L581 232Z" fill="url(#in)"/>
        <path d="M613 327L630 303V342Q626 329 613 327Z" fill="#4c5060"/>
        <path fill-rule="evenodd" d="M301 240V338Q303 367 320 402L340 440Q350 461 362 460Q388 459 407 456Q430 454 446 465C470 485 488 498 518 498Q550 496 590 473Q628 447 632 417L635 363V244.500H634A166 96 0 0 1 302 244.500ZM357 352L382 362L396 388L382 406L356 395L346 368ZM506 373Q560 364 597 344Q618 330 630 303V347Q617 370 587 389Q555 408 506 417Z" fill="url(#out)"/>
        <path d="M350 362L357 352L368 357L352 362Z" fill="#203a5e"/>
        <path d="M301 292L305 293L311 315L303 333Z" fill="#b2b5be"/>
        <g fill="none" stroke="#35b596" stroke-width="1.300">
          <path d="M350 177V285" stroke-width="2"/>
          <path d="M311 315Q327 295 350 286C370 277 391 261 430 251C455 245 500 241 525 252C556 265 569 305 585 315Q597 326 613 327Q629 330 630 345"/>
          <path d="M301 240V338Q303 367 320 402L340 440Q350 461 362 460Q388 459 407 456Q430 454 446 465C470 485 488 498 518 498Q550 496 590 473Q628 447 632 417L635 363V248M303 260V345"/>
          <path d="M465 207L488 184Q505 175 517 186Q522 195 517 203L497 222Q482 228 468 221Q461 216 465 207ZM592 217L610 230L618 260L610 274L592 259L581 232ZM357 352L382 362L396 388L382 406L356 395L346 368ZM506 373Q560 364 597 344Q618 330 630 303V347Q617 370 587 389Q555 408 506 417ZM301 292L305 293L311 315L303 333"/>
        </g>
        <path d="M581 232L592 259L610 274M346 368L356 395L382 406M508 417Q555 408 587 389Q617 370 629 349" fill="none" stroke="#d8fff0"/>
        <ellipse cx="468" cy="244.500" rx="166" ry="96" fill="none" stroke="#1f6f5c" stroke-width="2.200"/>
        <ellipse cx="468" cy="244" rx="166" ry="96" fill="none" stroke="#b4f6e2"/>
        <g fill="#225a70" stroke="#49cfae" stroke-width="1.200"><circle cx="350" cy="319" r="2.700"/><circle cx="384" cy="334" r="2.700"/><circle cx="424" cy="344" r="2.700"/><circle cx="467" cy="347" r="2.700"/><circle cx="510" cy="344" r="2.700"/><circle cx="551" cy="334" r="2.700" fill="#5c9a9c"/><circle cx="585" cy="319" r="2.700" fill="#4a9a8c"/><ellipse cx="612" cy="298" rx="2.500" ry="3" fill="#5c9a9c"/><ellipse cx="629" cy="276" rx="1.500" ry="3"/><ellipse cx="628" cy="226" rx="1.500" ry="3"/><ellipse cx="611" cy="203" rx="2.200" ry="3"/><circle cx="585" cy="183" r="2.700"/></g>
        <path d="M467.500 248V420" stroke="#1b16a8" stroke-width="1.200" stroke-dasharray="6 3 1 3"/>
        <path d="M467.500 404V420L474 423M465 418l5 4M465 422l5-4" stroke="#1b16a8" fill="none"/><path d="M465 405h5l-2.500 5zM470 420l5 4-5-1z" fill="#1b16a8"/>
        <text class="axt" x="468" y="242">Asse1</text>
        <g stroke-width="2"><path d="M202 562V552" stroke="#176d2c"/><path d="M202 562l9 5" stroke="#c22626"/><path d="M202 562l-9 4" stroke="#1a1a9c"/></g>
        <path d="M199 553l3-6 3 6z" fill="#176d2c"/><path d="M209 568l3-4 4 6z" fill="#c22626"/><path d="M195 563l2 5-8 2z" fill="#1a1a9c"/>
        <g class="tr"><text x="200" y="546" fill="#176d2c">Y</text><text x="214" y="573" fill="#c22626">X</text><text x="184" y="573" fill="#1a1a9c">Z</text></g>
        <text class="isot" x="184" y="595">*Isometrico</text>
      </svg>
      <div class="hud">
        <button><svg><use href="#zoomfit"/></svg></button><button><svg><use href="#zoomfit"/></svg></button><button><svg><use href="#pins"/></svg></button><button><svg><use href="#refresh"/></svg></button><button><svg><use href="#sheet"/></svg></button><button><svg><use href="#shade"/></svg></button><i class="d"></i><button><svg><use href="#iso"/></svg></button><i class="d"></i><button><svg><use href="#s3"/></svg></button><i class="d"></i><button><svg><use href="#ball"/></svg></button><i class="d"></i><button><svg><use href="#pic"/></svg></button><i class="d"></i>
      </div>
      <div class="vctl"><button aria-label="Riduci vista"><svg viewBox="0 0 16 16"><path d="M3 12h9" stroke="#b8c6e6" stroke-width="2"/></svg></button><button aria-label="Ripristina vista"><svg viewBox="0 0 16 16"><path d="M6 6V3h8v6h-3M3 6h8v7H3zM3 7h8" stroke="#b8c6e6" stroke-width="1.500" fill="none"/></svg></button><button aria-label="Chiudi vista"><svg viewBox="0 0 16 16"><path d="M3 4l9 9M12 4l-9 9" stroke="#b8c6e6" stroke-width="2"/></svg></button></div>
    </div>
    <div class="vs"><span></span><button class="up"></button><span class="fill"></span><button class="dn"></button></div>
    <div class="hs wide"><button class="al"></button><span class="fill"></span><button class="arr"></button></div>
    <div class="taskpane"><button><svg><use href="#home"/></svg></button><button><svg><use href="#lib"/></svg></button><button><svg><use href="#folder"/></svg></button><button class="sel"><svg><use href="#swi"/></svg></button><button><svg><use href="#pal"/></svg></button><button><svg><use href="#ball"/></svg></button><button><svg><use href="#hand"/></svg></button></div>
  </section>

  <aside class="side right">
    <i class="gh"></i>
    <div class="col c3"><p><button><svg><use href="#ske"/></svg></button><i class="d"></i></p><p><button><svg><use href="#erase"/></svg></button><i class="d"></i></p><p><button><svg><use href="#gsk"/></svg></button></p></div>
    <hr>
    <div class="col c27">
      <p><button><svg><use href="#s1"/></svg></button><i class="d"></i></p><p><button><svg><use href="#s2"/></svg></button><i class="d"></i></p><p><button><svg><use href="#s3"/></svg></button><i class="d"></i></p><p><button><svg><use href="#s4"/></svg></button><i class="d"></i></p><p><button><svg><use href="#s5"/></svg></button><i class="d"></i></p><p><button><svg><use href="#s6"/></svg></button><i class="d"></i></p><p><button><svg><use href="#s7"/></svg></button><i class="d"></i></p><p><button><svg><use href="#s8"/></svg></button><i class="d off"></i></p><p><button><svg><use href="#s9"/></svg></button></p><p><button><svg><use href="#s10"/></svg></button></p><p><button><svg><use href="#s11"/></svg></button></p><p><button><svg><use href="#s12"/></svg></button></p><p><button><svg><use href="#s13"/></svg></button></p><p><button><svg><use href="#gsk"/></svg></button></p><p><button><svg><use href="#gtrim"/></svg></button><i class="d off"></i></p><p><button><svg><use href="#dark"/></svg></button><i class="d"></i></p><p><button><svg><use href="#goff"/></svg></button></p><p><button><svg><use href="#gmir"/></svg></button></p><p><button><svg><use href="#ggrid"/></svg></button><i class="d off"></i></p><p><button><svg><use href="#gsq"/></svg></button><i class="d off"></i></p><p><button><svg><use href="#gmir"/></svg></button><i class="d off"></i></p><p><button><svg><use href="#gpv"/></svg></button></p><p><button><svg><use href="#target"/></svg></button><i class="d off"></i></p><p><button><svg><use href="#skb"/></svg></button></p><p><button><svg><use href="#garc"/></svg></button></p><p><button><svg><use href="#gsq"/></svg></button></p><p><button><svg><use href="#gsq"/></svg></button></p>
    </div>
    <div class="rest"></div>
  </aside>

  <div class="mini">
    <div><button><svg><use href="#cut"/></svg></button><button><svg><use href="#parent"/></svg></button><button><svg viewBox="0 0 16 16"><path d="M1 6l5-4v2h8v8h-3V8H6v2z" fill="#f0c838" stroke="#6a5208"/></svg></button></div>
    <div><button><svg><use href="#zoomfit"/></svg></button><button><svg><use href="#axis"/></svg></button><button><svg><use href="#ball"/></svg></button><i class="d"></i></div>
  </div>
  <menu class="ctx">
    <li><svg><use href="#cursork"/></svg>I<u>n</u>verti selezione</li>
    <li class="sep"></li>
    <li class="head">Funzione (Ripetizione piatta1)</li>
    <li class="sub">Commento</li>
    <li><u>P</u>adre/figlio...</li>
    <li><svg><use href="#conf"/></svg>C<u>o</u>nfigura funzione</li>
    <li><u>A</u>ggiungi alla nuova cartella</li>
    <li><svg><use href="#hand"/></svg>Propriet<u>à</u> delle funzioni...</li>
    <li><svg><use href="#glass"/></svg>Cam<u>b</u>ia trasparenza</li>
    <li class="sep"></li>
    <li>Rior<u>d</u>ina piegature</li>
    <li>A<u>l</u>terna visualizzazione piatta</li>
    <li class="sub">Feature<u>W</u>orks...</li>
    <li>Passa a...</li>
    <li>Crea <u>u</u>na cartella nuova</li>
    <li>Nascondi<u>/</u>Mostra elementi albero...</li>
    <li class="sep"></li>
    <li class="hot">Espor<u>t</u>azione in DXF/ DWG</li>
    <li>Personalizza <u>m</u>enu</li>
  </menu>
</main>

<footer class="status"><span class="msg">Esportazione in DXF/ DWG</span><i class="cell"></i><i class="cell"></i><span class="mode">ModificaParte</span><i class="cell"></i><i class="cell"></i><svg class="h"><use href="#help"/></svg><svg><use href="#label"/></svg></footer>

<div class="taskbar">
  <button class="start"><svg><use href="#win"/></svg>Start</button><i class="s"></i>
  <div class="ql"><svg><use href="#appA"/></svg><svg><use href="#ie"/></svg><svg><use href="#doc"/></svg><svg><use href="#mail"/></svg><svg><use href="#eng"/></svg><svg><use href="#bro"/></svg><svg><use href="#swi"/></svg><svg><use href="#blu"/></svg><svg><use href="#med"/></svg><svg><use href="#syn"/></svg></div>
  <i class="s"></i>
  <div class="wins"><button><svg><use href="#med"/></svg>Windo...</button><button><svg><use href="#folder"/></svg>063.3....</button><button><svg><use href="#mail"/></svg>Posta i...</button><button><svg><use href="#appA"/></svg>Cilindr...</button><button><svg><use href="#rar"/></svg>Tubo...</button><button class="cur"><svg><use href="#swi"/></svg>Solid...</button></div>
  <i class="s"></i>
  <div class="links"><span>Disegni_Mecoba su 'Server Mecoba (Serve</span><svg><use href="#folder"/></svg><span>A3 Abitare se</span><b>»</b></div>
  <i class="s"></i>
  <svg><use href="#helpk"/></svg>
  <svg viewBox="0 0 16 16"><path d="M6 1h7v5H6zM4 3h7v4H4z" fill="none" stroke="#222" stroke-width="1.500"/><path d="M5 11h6l-3 4z" fill="#222"/></svg>
  <div class="tray"><svg><use href="#appA"/></svg><svg><use href="#mail"/></svg><svg><use href="#shield"/></svg><svg><use href="#net"/></svg><time>11:03</time></div>
</div>
</body>
</html>
```
FILE: styles.css
```css
* { box-sizing: border-box; }
html, body { height: 100%; }
body {
  margin: 0; display: flex; flex-direction: column; overflow: hidden;
  font: 7px/11px "Liberation Sans", Arial, sans-serif; color: #1c1e28; background: #d6d3ca;
}
button, input, select { font: inherit; color: inherit; margin: 0; padding: 0; border: 0; background: none; border-radius: 0; outline: 0; }
button { display: flex; align-items: center; justify-content: center; }
svg { width: 11px; height: 11px; flex: none; display: block; }
i { flex: none; font-style: normal; }
.sprite { position: absolute; width: 0; height: 0; }
p, ul, menu, h1 { margin: 0; padding: 0; list-style: none; }

/* small shared marks */
.d { width: 8px; height: 3px; align-self: center; background: #3c4256; clip-path: polygon(30% 0, 80% 0, 55% 100%); }
.d.off { background: #9a9fae; }
.g { width: 8px; align-self: stretch; margin: 3px -2px 3px 2px; border-left: 2px dotted #a5aabb; }
.s { width: 2px; height: 12px; align-self: center; border-left: 1px solid #9da2b2; border-right: 1px solid #fff; }
.on { background: #c3c9de; border: 1px solid #6f7896; border-radius: 3px; }

/* title bar */
.titlebar { display: flex; align-items: center; height: 19px; flex: none; background: linear-gradient(#eceef6, #c5c8d7); border-bottom: 1px solid #9094a6; }
.brand { width: 79px; align-self: stretch; display: flex; align-items: center; gap: 2px; padding-left: 2px; font: 11px/18px "Roboto", sans-serif; color: #44454e; background: linear-gradient(#f1f1f6, #b4b7c6); }
.brand svg { width: 13px; height: 13px; }
.brand b { font-weight: 900; color: #2c2d34; }
.brandarrow { width: 6px; align-self: stretch; background: linear-gradient(#b0b3cb, #8084a8); }
.brandarrow::after { content: ""; display: block; margin: 7px 2px; border-left: 3px solid #222; border-top: 2px solid transparent; border-bottom: 2px solid transparent; }
.quick { display: flex; align-items: center; margin-left: 18px; width: 194px; }
.quick button { flex: 1; height: 16px; }
.titlebar h1 { flex: 1; text-align: center; font-size: 7px; font-weight: 400; color: #3c4050; }
.find { width: 124px; height: 13px; border-radius: 7px; border: 1px solid #9297a8; background: #fff; display: flex; align-items: center; }
.find input { flex: 1; min-width: 0; }
.wctl { display: flex; align-items: center; width: 69px; }
.wctl button { flex: 1; font-weight: 700; font-size: 9px; color: #555b70; }

/* toolbars */
.bar { display: grid; height: 19px; flex: none; background: linear-gradient(#f4f5fb, #c9cdde); border-bottom: 1px solid #a9aec2; }
.bar1 { grid-template-columns: 106fr 320fr 338fr 36fr; }
.bar2 { grid-template-columns: 86fr 410fr 304fr; height: 18px; }
.grp { display: flex; align-items: center; min-width: 0; padding-right: 2px; border-right: 1px solid #a3a8bb; }
.grp button { flex: 1; min-width: 0; height: 15px; }
.grp.last, .bar2 .grp:last-child { border: 0; }
.ser { font: 10px/12px "Liberation Serif", serif; color: #8c909e; }
.ser.blue { color: #1e2cb4; font-size: 12px; }
.more { font-size: 9px; }
.grp select {
  appearance: none; height: 12px; min-width: 0; margin-right: 2px;
  border: 1px solid #8d8d8d; border-right-color: #eee; border-bottom-color: #eee;
  background: conic-gradient(from -45deg at 50% 100%, #777 90deg, transparent 0) right 3px center / 4px 2px no-repeat,
    linear-gradient(90deg, #8d8d8d 1px, #e6e4de 1px) right / 10px 100% no-repeat, #d8d4ca;
}
.grp .c1 { flex: 0 0 103px; }
.grp .c2 { flex: 0 0 22px; }
.grp .c3 { flex: 0 0 38px; background: #d8d4ca; }

/* body */
main { flex: 1; min-height: 0; display: flex; position: relative; }
.side { width: 26px; flex: none; display: flex; flex-direction: column; background: linear-gradient(90deg, #f4f5fa, #dcdfec 60%, #bfc3d5); padding-left: 1px; }
.side.right { width: 27px; }
.gh { height: 3px; margin: 3px 3px 2px; border-top: 2px dotted #a5aabb; }
.col { display: grid; grid-auto-rows: 1fr; }
.col p { display: flex; align-items: center; min-height: 0; }
.col button { width: 16px; height: 14px; }
.c20 { height: 288px; }
.c15 { height: 216px; }
.c3 { height: 43px; }
.c27 { height: 389px; }
.side hr { width: 22px; height: 2px; margin: 3px 1px 0; border: 0; border-top: 1px solid #a3a8bb; border-bottom: 1px solid #fff; }
.right hr { margin: 1px 1px 2px; }
.rest { flex: 1; background: #bbc0d2; margin-left: -1px; border-top: 1px solid #9297a8; }
.down { transform: rotate(90deg); align-self: center; margin: auto 0 4px; width: 10px; height: 10px; }

.panel { width: 150px; flex: none; display: flex; flex-direction: column; background: #e1e4ec; border-right: 1px solid #777c8c; overflow: hidden; padding-top: 3px; border-left: 1px solid #c3c7d4; }
.tabs { display: flex; height: 14px; border-bottom: 1px solid #9499aa; }
.tabs button { width: 17px; border: 1px solid #9499aa; border-bottom: 0; background: #c6cad8; border-radius: 2px 2px 0 0; }
.tabs .sel { background: #e6e9f1; }
.tabs span { margin-left: auto; padding-right: 4px; font-size: 9px; color: #555; }
.filter { display: flex; align-items: center; height: 10px; margin: 2px 1px; border: 1px solid #8f95a6; border-radius: 5px; background: #fff; padding-left: 3px; }
.filter svg { width: 8px; height: 8px; }
.filter input { flex: 1; min-width: 0; height: 8px; }
.root { display: flex; align-items: center; height: 11px; gap: 1px; white-space: nowrap; }
.tree { height: 203px; display: grid; grid-auto-rows: 1fr; margin-left: 5px; border-left: 1px dotted #999; }
.tree li { display: flex; align-items: center; gap: 3px; white-space: nowrap; padding-left: 6px; position: relative; min-height: 0; }
.tree svg { width: 10px; height: 10px; }
.tree .x::before {
  content: ""; position: absolute; left: -3px; width: 5px; height: 5px; border: 1px solid #8a90a2;
  background: linear-gradient(#333, #333) center / 3px 1px no-repeat, linear-gradient(#333, #333) center / 1px 3px no-repeat, #fff;
}
mark { background: #10246c; color: #fff; line-height: 9px; }
.rollback { height: 2px; background: #2e66b8; margin-bottom: auto; }

.hs { display: flex; height: 10px; background: #eceae4; }
.hs button { width: 9px; background: #dedbd3; }
.hs button::after { content: ""; border: 2px solid transparent; }
.hs .al::after { border-right: 3px solid #222; }
.hs .arr::after { border-left: 3px solid #222; }
.thumb { width: 98px; background: #d5d1c8; border: 1px solid #fff; border-right-color: #777; border-bottom-color: #777; margin-right: auto; }
.fill { flex: 1; }

.work { flex: 1; min-width: 0; display: grid; grid-template: 1fr 10px / 1fr 10px; position: relative; }
.view { position: relative; min-height: 0; overflow: hidden; background: linear-gradient(#2f70f8, #4385f8 32%, #669ff8 66%, #86b5f5); border-top: 1px solid #6880b4; }
.scene { width: 100%; height: 100%; }
.scene text { font: 9px "Lato", sans-serif; }
.scene .axt { fill: #3322b8; font-size: 10px; }
.scene .isot { fill: #24377e; font-family: "Noto Sans", sans-serif; }
.scene .tr text { font-size: 7px; }
.hud { position: absolute; top: 3px; left: 35%; display: flex; width: 170px; opacity: .6; }
.hud button { flex: 1; height: 11px; }
.hud svg { width: 9px; height: 9px; }
.vctl { position: absolute; top: 3px; right: 4px; display: flex; gap: 3px; }
.vs { display: flex; flex-direction: column; background: #eceae4; }
.vs span:first-child { height: 142px; }
.vs button { width: 10px; height: 10px; background: #dedbd3; border: 1px solid #fff; border-right-color: #777; border-bottom-color: #777; }
.vs button::after { content: ""; width: 4px; height: 2px; background: #555; }
.vs .up::after { clip-path: polygon(50% 0, 100% 100%, 0 100%); }
.vs .dn::after { clip-path: polygon(0 0, 100% 0, 50% 100%); }
.wide { grid-column: 1 / 3; }
.wide .arr { margin-right: 12px; border-right: 1px solid #777; }
.wide .al { border-right: 1px solid #777; }
.taskpane { position: absolute; right: 0; top: 38px; width: 15px; }
.taskpane button { width: 15px; height: 15px; background: #c2c6d0; border: 1px solid #8f95a4; border-right: 0; }
.taskpane .sel { background: #f0f1f6; }

/* pop-ups */
.mini, .ctx { position: absolute; left: 64px; width: 148px; background: #f3f4f9; border: 1px solid #454b66; box-shadow: 2px 2px 1px #0005; }
.mini { top: 193px; padding: 2px 1px 6px; }
.mini div { display: flex; height: 14px; align-items: center; }
.mini button { width: 15px; }
.ctx { top: 237px; padding: 2px 0 3px; background: linear-gradient(90deg, #dcdfe7 18px, #f4f5fa 18px); line-height: 12px; }
.ctx li { height: 12px; padding-left: 21px; white-space: nowrap; position: relative; }
.ctx svg { position: absolute; left: 3px; top: 0; }
.ctx .sep { height: 5px; margin-left: 19px; background: linear-gradient(#a4a8b6, #a4a8b6) 0 2px / 100% 1px no-repeat; }
.ctx .head { padding-left: 1px; font-weight: 700; background: linear-gradient(#d4d6e2, #a9acbc); height: 10px; line-height: 10px; margin: 2px 0 1px; }
.ctx .sub::after { content: ""; position: absolute; right: 4px; top: 4px; border: 2px solid transparent; border-left: 3px solid #222; }
.ctx .hot { background: linear-gradient(#fff, #d9dce8); border-top: 1px solid #aeb2c2; border-bottom: 1px solid #8f94a6; line-height: 10px; }

/* status and task bar */
.status { display: flex; align-items: center; height: 14px; flex: none; background: #aab4c0; border-top: 1px solid #8f98a4; padding: 0 8px 0 1px; }
.msg { flex: 1; }
.cell { width: 3px; height: 10px; margin-right: 2px; border: 1px solid #8b95a2; border-right-color: #d8dee4; }
.mode { padding: 0 2px; border: 1px solid #8b95a2; border-right-color: #d8dee4; border-bottom-color: #d8dee4; line-height: 9px; margin-right: 3px; }
.status svg { width: 9px; height: 9px; }
.status .h { margin: 0 32px 0 7px; }
.taskbar { display: flex; align-items: center; height: 19px; flex: none; background: #d7d3ca; border-top: 1px solid #fff; gap: 3px; padding: 0 2px 0 1px; }
.taskbar button { height: 15px; border: 1px solid #fff; border-right-color: #66645f; border-bottom-color: #66645f; gap: 2px; }
.start { width: 34px; font-weight: 700; }
.ql { display: flex; width: 144px; justify-content: space-between; margin: 0 14px 0 2px; }
.wins { display: flex; gap: 2px; width: 279px; }
.wins button { flex: 1; min-width: 0; justify-content: flex-start; padding-left: 2px; }
.wins .cur { font-weight: 700; background: #eceae5; border-color: #66645f #fff #fff #66645f; }
.links { flex: 1; min-width: 0; display: flex; align-items: center; gap: 1px; white-space: nowrap; }
.links b { margin-left: auto; font-size: 9px; }
.tray { width: 71px; height: 15px; display: flex; align-items: center; gap: 1px; border: 1px solid #8b8982; border-right-color: #fff; border-bottom-color: #fff; }
.tray svg { width: 11px; height: 10px; }
time { margin-left: 1px; }
```
